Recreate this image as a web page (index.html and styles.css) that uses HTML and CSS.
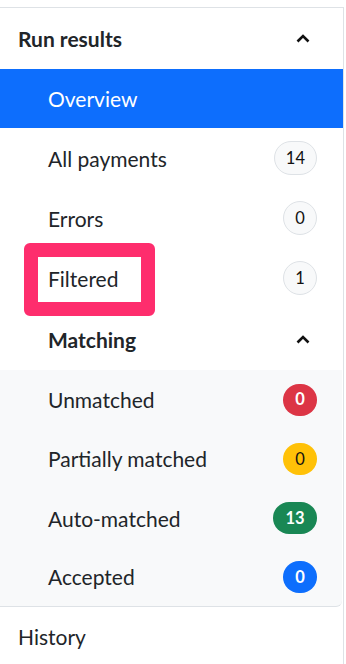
FILE: index.html
```html
<!DOCTYPE html>
<html>
<head>
<meta charset="utf-8">
<link rel="stylesheet" href="styles.css">
</head>
<body>
<nav class="sidebar">
  <div class="group-head">
    <span class="head-title">Run results</span>
    <svg class="chev" width="14" height="9" viewBox="0 0 14 9"><path d="M1.5 7.5 L7 2 L12.5 7.5" fill="none" stroke="#111" stroke-width="2.6"/></svg>
  </div>
  <div class="item active"><span>Overview</span></div>
  <div class="item"><span>All payments</span><span class="badge badge-light">14</span></div>
  <div class="item"><span>Errors</span><span class="badge badge-light">0</span></div>
  <div class="item"><span>Filtered</span><span class="badge badge-light">1</span></div>
  <div class="sub-head">
    <span class="head-title">Matching</span>
    <svg class="chev" width="14" height="9" viewBox="0 0 14 9"><path d="M1.5 7.5 L7 2 L12.5 7.5" fill="none" stroke="#111" stroke-width="2.6"/></svg>
  </div>
  <div class="sub-group">
    <div class="item sub"><span>Unmatched</span><span class="badge badge-red">0</span></div>
    <div class="item sub"><span>Partially matched</span><span class="badge badge-yellow">0</span></div>
    <div class="item sub"><span>Auto-matched</span><span class="badge badge-green">13</span></div>
    <div class="item sub"><span>Accepted</span><span class="badge badge-blue">0</span></div>
  </div>
  <div class="item top"><span>History</span></div>
  <div class="highlight"></div>
</nav>
</body>
</html>
```
FILE: styles.css
```css
html, body {
  margin: 0;
  padding: 0;
  background: #fff;
}
body {
  font-family: "Lato", "Noto Sans", sans-serif;
  color: #212529;
  font-size: 21px;
}
.sidebar {
  position: relative;
  margin-top: 7px;
  border-top: 1px solid #dee2e6;
  border-right: 1px solid #dee2e6;
  width: 344px;
  height: 657px;
  overflow: hidden;
  box-sizing: border-box;
}
.group-head, .sub-head {
  display: flex;
  align-items: center;
  justify-content: space-between;
  padding: 0 33px 0 18px;
  height: 61px;
  box-sizing: border-box;
}
.sub-head {
  padding-left: 48px;
  height: 62px;
}
.head-title {
  font-weight: 700;
}
.chev {
  display: block;
}
.item {
  display: flex;
  align-items: center;
  justify-content: space-between;
  height: 60px;
  padding: 0 26px 0 48px;
  box-sizing: border-box;
}
.item.active {
  background: #0d6efd;
  color: #fff;
  height: 59px;
}
.item.top {
  padding-left: 18px;
  height: 58px;
}
.sub-group {
  background: #f8f9fa;
  border-bottom: 1px solid #dee2e6;
  border-bottom-right-radius: 6px;
  margin-right: 1px;
}
.item.sub {
  height: 59.25px;
  padding-right: 25px;
}
.sub-group .item.sub:last-child {
  height: 58.25px;
}
.badge {
  display: inline-flex;
  align-items: center;
  justify-content: center;
  min-width: 34px;
  height: 32px;
  padding: 0 11px;
  box-sizing: border-box;
  border-radius: 17px;
  font-size: 16.5px;
  line-height: 1;
}
.badge-light {
  background: #f8f9fa;
  border: 1px solid #dee2e6;
  color: #111;
  height: 34px;
}
.badge-red { background: #dc3545; color: #fff; font-weight: 700; }
.badge-yellow { background: #ffc107; color: #111; }
.badge-green { background: #198754; color: #fff; font-weight: 700; min-width: 44px; }
.badge-blue { background: #0d6efd; color: #fff; font-weight: 700; }
.highlight {
  position: absolute;
  left: 24px;
  top: 235px;
  width: 131px;
  height: 73px;
  box-sizing: border-box;
  border: 14px solid #fe2d6d;
  border-radius: 6px;
}
```
